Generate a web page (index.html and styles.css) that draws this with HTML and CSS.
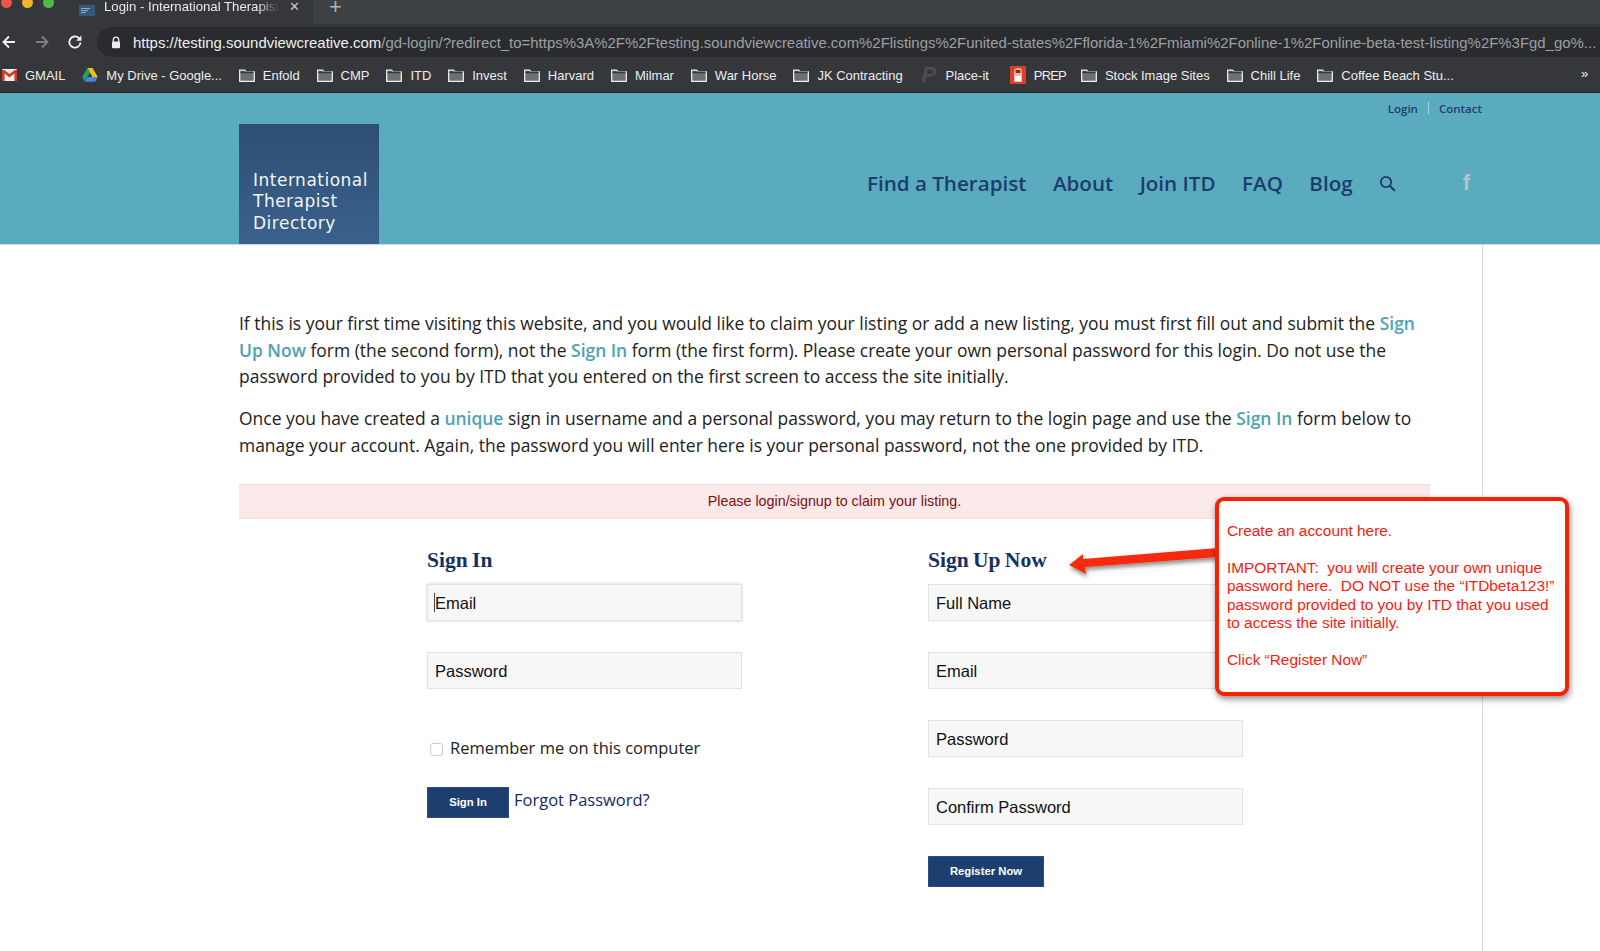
FILE: index.html
```html
<!DOCTYPE html>
<html lang="en">
<head>
<meta charset="utf-8">
<title>Login - International Therapist Directory</title>
<link rel="stylesheet" href="styles.css">
</head>
<body>
<div class="chrome">
  <div class="tabstrip">
    <div class="lights"><i class="light red"></i><i class="light yellow"></i><i class="light green"></i></div>
    <div class="tab">
      <svg class="favicon" width="16" height="11" viewBox="0 0 16 11"><rect width="16" height="11" fill="#34597f"/><path d="M2 3.500h9M2 5.500h7M2 7.500h5" stroke="#b9c8d8" stroke-width=".7"/></svg>
      <span class="tab-title">Login - International Therapist</span>
      <span class="tab-close">✕</span>
    </div>
    <span class="tab-new">+</span>
  </div>
  <div class="toolbar">
    <svg class="nav-ico" width="16" height="16" viewBox="0 0 16 16"><path d="M14 8H3M8 2.500 2.500 8 8 13.500" fill="none" stroke="#f1f3f4" stroke-width="1.800"/></svg>
    <svg class="nav-ico" width="16" height="16" viewBox="0 0 16 16"><path d="M2 8h11M8 2.500 13.500 8 8 13.500" fill="none" stroke="#7d8083" stroke-width="1.800"/></svg>
    <svg class="nav-ico" width="16" height="16" viewBox="0 0 16 16"><path d="M13.500 8.500A5.600 5.600 0 1 1 11.800 4L13.500 5.600" fill="none" stroke="#f1f3f4" stroke-width="1.800"/><path d="M14.400 1.600v5.200H9.200z" fill="#f1f3f4"/></svg>
    <div class="omnibox">
      <svg class="lock" width="10" height="13" viewBox="0 0 10 13"><path d="M2.300 6V3.900a2.700 2.700 0 0 1 5.400 0V6" fill="none" stroke="#eee" stroke-width="1.300"/><rect x="1" y="5.600" width="8" height="6.600" rx="1" fill="#eee"/></svg>
      <span class="url"><span class="url-strong">https://testing.soundviewcreative.com</span>/gd-login/?redirect_to=https%3A%2F%2Ftesting.soundviewcreative.com%2Flistings%2Funited-states%2Fflorida-1%2Fmiami%2Fonline-1%2Fonline-beta-test-listing%2F%3Fgd_go%...</span>
    </div>
  </div>
  <div class="bookmarks">
    <span class="bm bm-gmail"><svg width="15" height="12" viewBox="0 0 15 12"><rect width="15" height="12" rx="1" fill="#eee"/><path d="M0 1h2.400l5.100 4 5.100-4H15v11h-2.600V4.600L7.500 8.400 2.600 4.600V12H0z" fill="#d5392b"/></svg>GMAIL</span>
    <span class="bm bm-drive"><svg width="16" height="14" viewBox="0 0 16 14"><path d="M5.300 0h5.200l5.300 9H10.600z" fill="#f4c20d"/><path d="M5.300 0 .2 9l2.600 4.600L8 4.600z" fill="#1ea362"/><path d="M2.800 13.700h10.400l2.600-4.700H5.500z" fill="#4a80ea"/></svg>My Drive - Google...</span>
    <span class="bm"><svg class="folder" width="16" height="13" viewBox="0 0 16 13"><use href="#f"/></svg>Enfold</span>
    <span class="bm"><svg class="folder" width="16" height="13" viewBox="0 0 16 13"><use href="#f"/></svg>CMP</span>
    <span class="bm"><svg class="folder" width="16" height="13" viewBox="0 0 16 13"><use href="#f"/></svg>ITD</span>
    <span class="bm"><svg class="folder" width="16" height="13" viewBox="0 0 16 13"><use href="#f"/></svg>Invest</span>
    <span class="bm"><svg class="folder" width="16" height="13" viewBox="0 0 16 13"><use href="#f"/></svg>Harvard</span>
    <span class="bm"><svg class="folder" width="16" height="13" viewBox="0 0 16 13"><use href="#f"/></svg>Milmar</span>
    <span class="bm"><svg class="folder" width="16" height="13" viewBox="0 0 16 13"><use href="#f"/></svg>War Horse</span>
    <span class="bm"><svg class="folder" width="16" height="13" viewBox="0 0 16 13"><use href="#f"/></svg>JK Contracting</span>
    <span class="bm bm-place"><span class="p-ico">P</span>Place-it</span>
    <span class="bm bm-prep"><svg width="16" height="18" viewBox="0 0 16 18"><rect width="16" height="18" rx="1" fill="#d8402c"/><path d="M4 16V6a4 4 0 0 1 8 0v10z" fill="#f3b9a8"/><rect x="5" y="10" width="6" height="5" fill="#fff"/><rect x="5.500" y="4" width="5" height="3" fill="#a3231a"/></svg>PREP</span>
    <span class="bm"><svg class="folder" width="16" height="13" viewBox="0 0 16 13"><use href="#f"/></svg>Stock Image Sites</span>
    <span class="bm"><svg class="folder" width="16" height="13" viewBox="0 0 16 13"><use href="#f"/></svg>Chill Life</span>
    <span class="bm"><svg class="folder" width="16" height="13" viewBox="0 0 16 13"><use href="#f"/></svg>Coffee Beach Stu...</span>
    <span class="bm-more">»</span>
  </div>
</div>
<svg class="defs" width="0" height="0"><defs><g id="f"><path d="M.7 12.300V1.200h5l1.200 1.600h8.400v9.500z" fill="#6d7072" stroke="#eee" stroke-width="1.300"/><path d="M1.400 2.500h13.200v1.700H1.400z" fill="#35373b"/></g></defs></svg>

<header class="site-header">
  <div class="header-inner">
    <a class="logo">International Therapist Directory</a>
    <div class="header-right">
      <div class="top-links"><a>Login</a><span class="sep"></span><a>Contact</a></div>
      <nav class="main-nav">
        <a>Find a Therapist</a>
        <a>About</a>
        <a>Join ITD</a>
        <a>FAQ</a>
        <a>Blog</a>
        <svg class="search" width="17" height="17" viewBox="0 0 17 17"><circle cx="7" cy="7" r="5.200" fill="none" stroke="#1d3c6e" stroke-width="1.800"/><path d="m10.800 10.800 5 5" stroke="#1d3c6e" stroke-width="2.200"/></svg>
        <span class="fb">f</span>
      </nav>
    </div>
  </div>
</header>

<main class="page">
  <div class="content">
    <p class="intro">If this is your first time visiting this website, and you would like to claim your listing or add a new listing, you must first fill out and submit the <b>Sign Up Now</b> form (the second form), not the <b>Sign In</b> form (the first form). Please create your own personal password for this login. Do not use the password provided to you by ITD that you entered on the first screen to access the site initially.</p>
    <p class="intro second">Once you have created a <b>unique</b> sign in username and a personal password, you may return to the login page and use the <b>Sign In</b> form below to manage your account. Again, the password you will enter here is your personal password, not the one provided by ITD.</p>
    <div class="alert">Please login/signup to claim your listing.</div>
    <div class="forms">
      <form class="form">
        <h2>Sign In</h2>
        <div class="field focus"><i class="caret"></i><input type="text" placeholder="Email"></div>
        <div class="field"><input type="text" placeholder="Password"></div>
        <label class="remember"><input type="checkbox"><span>Remember me on this computer</span></label>
        <div class="actions"><button type="button" class="btn btn-signin">Sign In</button><a class="forgot">Forgot Password?</a></div>
      </form>
      <form class="form">
        <h2>Sign Up Now</h2>
        <div class="field"><input type="text" placeholder="Full Name"></div>
        <div class="field"><input type="text" placeholder="Email"></div>
        <div class="field"><input type="text" placeholder="Password"></div>
        <div class="field"><input type="text" placeholder="Confirm Password"></div>
        <button type="button" class="btn btn-register">Register Now</button>
      </form>
    </div>
  </div>
</main>

<svg class="arrow" width="160" height="50" viewBox="0 0 160 50"><defs><filter id="s" x="-10%" y="-30%" width="120%" height="170%"><feDropShadow dx="1" dy="3" stdDeviation="2" flood-opacity=".45"/></filter></defs><path d="M1 25 15 14v5l135-11v9L17 27l1 7z" fill="#f82a08" filter="url(#s)"/></svg>
<aside class="callout">
  <p>Create an account here.</p>
  <p>IMPORTANT:&nbsp; you will create your own unique password here.&nbsp; DO NOT use the “ITDbeta123!” password provided to you by ITD that you used to access the site initially.</p>
  <p>Click “Register Now”</p>
</aside>
</body>
</html>
```
FILE: styles.css
```css
* { box-sizing: border-box; }
html, body { margin: 0; padding: 0; }
body { width: 1600px; height: 951px; overflow: hidden; position: relative; background: #fff; font-family: "Open Sans", sans-serif; color: #222; }
.defs { position: absolute; }

.chrome { height: 93px; background: #35373b; font-family: "Liberation Sans", sans-serif; border-bottom: 1px solid #222; }
.tabstrip { height: 24px; background: #3d4144; display: flex; align-items: flex-start; position: relative; overflow: hidden; }
.lights { width: 68px; height: 24px; background: #35373b; display: flex; gap: 10px; padding-left: 1px; }
.light { width: 11px; height: 11px; border-radius: 50%; margin-top: -3px; flex: none; }
.red { background: #e9564b; }
.yellow { background: #f0b52f; }
.green { background: #4fba46; }
.tab { width: 245px; height: 24px; background: #35373b; display: flex; align-items: flex-start; padding: 0 0 0 11px; color: #e8eaed; font-size: 13.200px; line-height: 14px; }
.favicon { margin-right: 9px; margin-top: 5px; flex: none; }
.tab-title { width: 175px; white-space: nowrap; overflow: hidden; -webkit-mask-image: linear-gradient(90deg, #000 88%, transparent); mask-image: linear-gradient(90deg, #000 88%, transparent); }
.tab-close { margin-left: 10px; font-size: 13px; color: #c8cacc; }
.tab-new { margin-left: 16px; color: #aeb0b2; font-size: 22px; line-height: 13px; }

.toolbar { height: 36px; display: flex; align-items: center; padding-left: 1px; gap: 17px; }
.nav-ico { flex: none; }
.omnibox { flex: 1; height: 30px; background: #292b2e; border-radius: 15px 0 0 15px; margin-left: -3px; display: flex; align-items: center; padding-left: 14px; overflow: hidden; min-width: 0; }
.lock { flex: none; margin-right: 12px; }
.url { font-size: 14.950px; color: #9da0a3; white-space: nowrap; }
.url-strong { color: #eef0f1; }

.bookmarks { height: 32px; display: flex; align-items: center; padding: 0 0 2px 2px; gap: 16.900px; color: #eceeef; font-size: 13px; position: relative; }
.bm { display: flex; align-items: center; gap: 8px; white-space: nowrap; flex: none; }
.bm-place { margin-left: 2px; }
.bm-prep { margin-left: 4px; margin-right: -2px; letter-spacing: -.8px; }
.p-ico { color: #4c4e51; font-size: 22px; font-weight: 700; font-style: italic; line-height: 14px; width: 16px; }
.bm-more { position: absolute; left: 1581px; top: 6px; font-size: 13px; }

.site-header { height: 152px; background: #5babbf; border-bottom: 1px solid #cbd8e2; }
.header-inner { width: 1243px; height: 151px; margin-left: 239px; display: flex; align-items: flex-end; justify-content: space-between; }
.logo { width: 140px; height: 120px; background: linear-gradient(180deg, #2e4e74, #3a618c); color: #f2f5f8; font-family: "DejaVu Sans", sans-serif; font-size: 17px; letter-spacing: .5px; line-height: 21.400px; padding: 46px 5px 0 14px; }
.header-right { height: 151px; display: flex; flex-direction: column; align-items: flex-end; }
.top-links { display: flex; align-items: center; height: 16px; margin-top: 7px; gap: 10px; font-size: 11.500px; font-weight: 600; color: #1d3c6e; }
.sep { width: 1px; height: 12px; background: #a9d3dd; }
.main-nav { display: flex; align-items: center; gap: 26.500px; margin-top: 52px; font-size: 20.600px; font-weight: 600; color: #1d3c6e; height: 30px; padding-right: 12px; }
.fb { margin-left: 40px; color: #b3c6ca; font-family: "Liberation Sans", sans-serif; font-weight: 700; font-size: 22px; }

.page { margin-left: 239px; width: 1244px; height: 706px; border-right: 1px solid #dcdcdc; padding-top: 65px; }
.content { width: 1191px; }
.intro { margin: 0; font-size: 17.470px; line-height: 26.700px; color: #222; }
.intro.second { margin-top: 15px; }
.intro b { color: #4ea2b6; font-weight: 600; }
.alert { margin-top: 25px; height: 35px; background: #fbe8e8; border-top: 1px solid #e8e0e0; border-bottom: 1px solid #e8e0e0; color: #7c1012; font-family: "Liberation Sans", sans-serif; font-size: 14.300px; line-height: 32px; text-align: center; }

.forms { display: flex; padding-left: 188px; margin-top: 27px; }
.form { width: 501px; }
.form h2 { margin: 0 0 10px; font-family: "Liberation Serif", serif; font-weight: 700; font-size: 21.500px; word-spacing: -1px; line-height: 28px; color: #16305f; }
.field { width: 315px; height: 37px; margin-bottom: 31px; position: relative; }
.field input { width: 100%; height: 100%; border: 1px solid #e2e2e2; background: #f7f7f7; padding: 2px 7px 0; font-family: "Liberation Sans", sans-serif; font-size: 16.500px; color: #111; outline: 0; }
.field input::placeholder { color: #111; opacity: 1; }
.field.focus input { box-shadow: 0 0 3px #d0d0d0; }
.caret { position: absolute; left: 7px; top: 9px; width: 1px; height: 19px; background: #444; }
.remember { display: flex; align-items: center; gap: 7px; margin: 47px 0 0 3px; font-size: 16.500px; height: 24px; color: #222; }
.remember input { margin: 3px 0 0; width: 13px; height: 13px; appearance: none; border: 1px solid #ccc; border-radius: 3px; background: #fff; }
.actions { display: flex; align-items: center; gap: 5px; margin-top: 27px; }
.btn { border: 1px solid #2a4d85; background: #1c3f70; color: #fff; font-family: "Liberation Sans", sans-serif; font-weight: 700; font-size: 11.300px; padding: 0; height: 31px; }
.btn-signin { width: 82px; }
.btn-register { width: 116px; }
.forgot { font-size: 16.500px; color: #15286a; margin-top: -5px; }

.arrow { position: absolute; left: 1068px; top: 540px; }
.callout { position: absolute; left: 1215px; top: 497px; width: 354px; height: 199px; background: #fff; border: 4px solid #f82200; border-radius: 9px; box-shadow: 1px 3px 6px rgba(0,0,0,.45); padding: 21px 8px 0; color: #fb1b0c; font-family: "Liberation Sans", sans-serif; font-size: 15.400px; line-height: 18.400px; }
.callout p { margin: 0 0 18.400px; }
```
